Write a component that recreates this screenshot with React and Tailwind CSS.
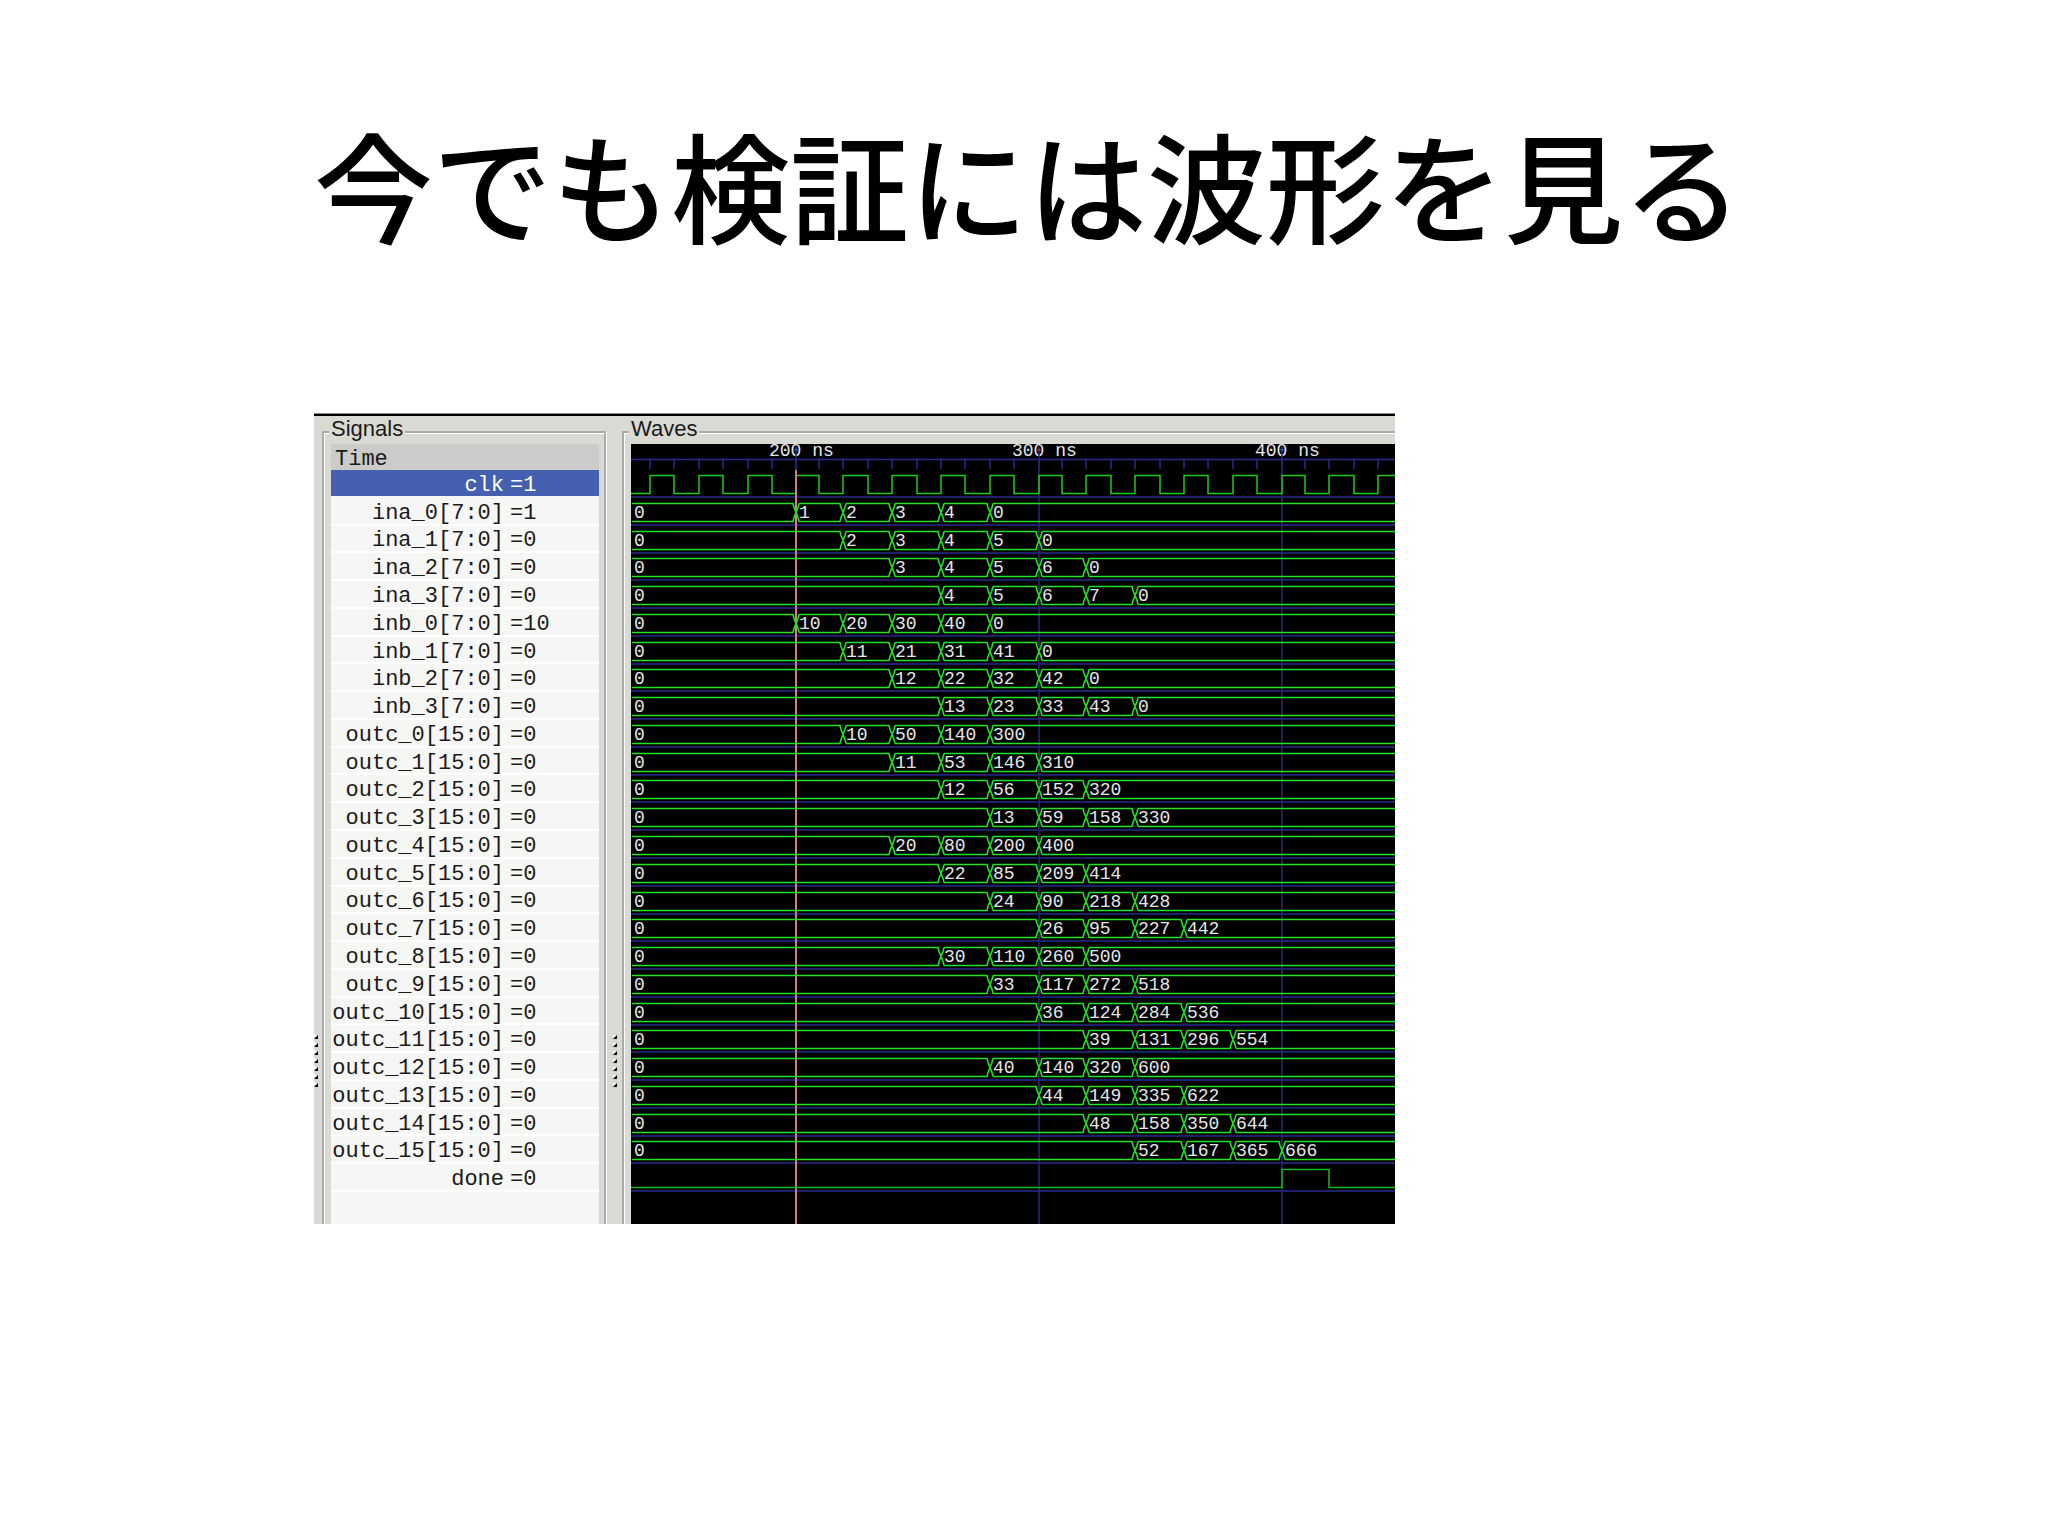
import React from 'react';

// Bus signals: the first value change and the values that follow every 20 ns
const BUSES = [
  { name: 'ina_0[7:0]', now: '1', start: 200, values: [1, 2, 3, 4, 0] },
  { name: 'ina_1[7:0]', now: '0', start: 220, values: [2, 3, 4, 5, 0] },
  { name: 'ina_2[7:0]', now: '0', start: 240, values: [3, 4, 5, 6, 0] },
  { name: 'ina_3[7:0]', now: '0', start: 260, values: [4, 5, 6, 7, 0] },
  { name: 'inb_0[7:0]', now: '10', start: 200, values: [10, 20, 30, 40, 0] },
  { name: 'inb_1[7:0]', now: '0', start: 220, values: [11, 21, 31, 41, 0] },
  { name: 'inb_2[7:0]', now: '0', start: 240, values: [12, 22, 32, 42, 0] },
  { name: 'inb_3[7:0]', now: '0', start: 260, values: [13, 23, 33, 43, 0] },
  { name: 'outc_0[15:0]', now: '0', start: 220, values: [10, 50, 140, 300] },
  { name: 'outc_1[15:0]', now: '0', start: 240, values: [11, 53, 146, 310] },
  { name: 'outc_2[15:0]', now: '0', start: 260, values: [12, 56, 152, 320] },
  { name: 'outc_3[15:0]', now: '0', start: 280, values: [13, 59, 158, 330] },
  { name: 'outc_4[15:0]', now: '0', start: 240, values: [20, 80, 200, 400] },
  { name: 'outc_5[15:0]', now: '0', start: 260, values: [22, 85, 209, 414] },
  { name: 'outc_6[15:0]', now: '0', start: 280, values: [24, 90, 218, 428] },
  { name: 'outc_7[15:0]', now: '0', start: 300, values: [26, 95, 227, 442] },
  { name: 'outc_8[15:0]', now: '0', start: 260, values: [30, 110, 260, 500] },
  { name: 'outc_9[15:0]', now: '0', start: 280, values: [33, 117, 272, 518] },
  { name: 'outc_10[15:0]', now: '0', start: 300, values: [36, 124, 284, 536] },
  { name: 'outc_11[15:0]', now: '0', start: 320, values: [39, 131, 296, 554] },
  { name: 'outc_12[15:0]', now: '0', start: 280, values: [40, 140, 320, 600] },
  { name: 'outc_13[15:0]', now: '0', start: 300, values: [44, 149, 335, 622] },
  { name: 'outc_14[15:0]', now: '0', start: 320, values: [48, 158, 350, 644] },
  { name: 'outc_15[15:0]', now: '0', start: 340, values: [52, 167, 365, 666] },
];

const SIGNALS = [{ name: 'clk', now: '1' }, ...BUSES, { name: 'done', now: '0' }];

const HEADER = 26;
const PITCH = 722 / 26;
const FAR = 4000; // traces run on past the right edge and are clipped there

const MAJOR = { 200: 165, 300: 408, 400: 651 };
const TICKS = Array.from({ length: 31 }, (_, i) => 140 + i * 10);

// Time in ns to x inside the wave area
const timeToX = (t) => {
  if (t < 200) return Math.round(141 - ((190 - t) / 10) * 24.4);
  const base = Math.min(Math.floor(t / 100) * 100, 400);
  const steps = (t - base) / 10;
  return steps === 0 ? MAJOR[base] : Math.round(MAJOR[base] + 23 + (steps - 1) * 24.4);
};

const rowTop = (i) => Math.round(HEADER + i * PITCH);

const clockPath = () => {
  const hi = rowTop(0) + 5.5;
  const lo = rowTop(0) + 23.5;
  let d = `M0 ${lo}`;
  TICKS.forEach((t) => {
    d += ` H${timeToX(t)} V${t % 20 === 0 ? hi : lo}`;
  });
  return `${d} H${FAR}`;
};

const donePath = () => {
  const y = rowTop(25);
  return `M0 ${y + 23.5} H${timeToX(400)} V${y + 5.5} H${timeToX(420)} V${y + 23.5} H${FAR}`;
};

// One bus: two rails with a crossing at every value change
const BusTrace = ({ bus, row }) => {
  const y = rowTop(row);
  const top = y + 5.5;
  const bottom = y + 23.5;
  const edges = bus.values.map((_, i) => timeToX(bus.start + i * 20));
  let d = '';
  let from = 1;
  edges.forEach((x) => {
    d += `M${from} ${top} H${x - 3} L${x - 2} ${top + 4} L${x + 2} ${bottom - 4} L${x + 3} ${bottom} `;
    d += `M${from} ${bottom} H${x - 3} L${x - 2} ${bottom - 4} L${x + 2} ${top + 4} L${x + 3} ${top} `;
    from = x + 3;
  });
  d += `M${from} ${top} H${FAR} M${from} ${bottom} H${FAR}`;

  return (
    <g>
      <path d={d} fill="none" stroke="#22e022" strokeWidth="1.6" />
      <text x="3" y={y + 20}>0</text>
      {bus.values.map((value, i) => (
        <text key={i} x={edges[i] + 3} y={y + 20}>{value}</text>
      ))}
    </g>
  );
};

// The drawing starts 4px above the black area, so the time labels have headroom
const WaveArea = () => (
  <div className="flex h-[780px] bg-black">
    <svg
      className="-mt-1 h-[784px] w-full overflow-hidden font-['Liberation_Mono',monospace] text-[18px]"
      fill="#e6e6e6"
      role="img"
      aria-label="Waves"
    >
      <g transform="translate(0 4)">
        <g stroke="#2a2a8c" strokeWidth="1.5">
          <path d={`M0 15.5 H${FAR}`} />
          {TICKS.map((t) => (
            <path key={t} d={`M${timeToX(t)} 16 V25`} />
          ))}
          {SIGNALS.map((signal, i) => (
            <path key={signal.name} d={`M0 ${rowTop(i) + 27} H${FAR}`} />
          ))}
        </g>
        {Object.entries(MAJOR).map(([t, x]) => (
          <g key={t}>
            <text x={x - 27} y="12">{t} ns</text>
            <path d={`M${x} 3 V780`} stroke="#262674" strokeWidth="1.6" />
          </g>
        ))}
        <path d={clockPath()} fill="none" stroke="#1ccc1c" strokeWidth="1.5" />
        <path d="M165 26 V780" stroke="#cf8080" strokeWidth="2" />
        {BUSES.map((bus, i) => (
          <BusTrace key={bus.name} bus={bus} row={i + 1} />
        ))}
        <path d={donePath()} fill="none" stroke="#16b816" strokeWidth="1.5" />
      </g>
    </svg>
  </div>
);

const SignalList = () => (
  <div className="h-[780px] bg-[#f6f6f4] font-['Liberation_Mono',monospace] text-[22px] text-[#1a1a1a]">
    <div className="h-[26px] bg-[#cbcbc9] pl-1 pt-[3px] leading-[26px]">Time</div>
    <ul className="grid h-[722px] grid-rows-[repeat(26,minmax(0,1fr))]">
      {SIGNALS.map((signal, i) => (
        <li
          key={signal.name}
          className={`flex items-center gap-1.5 border-b-2 pt-1.5 leading-5 ${
            i === 0 ? 'border-[#f6f6f4] bg-[#4460ae] bg-clip-padding text-white' : 'border-white'
          }`}
        >
          <span className="w-[173px] text-right">{signal.name}</span>
          <span>={signal.now}</span>
        </li>
      ))}
    </ul>
  </div>
);

// Dotted handle between two panes
const Grip = () => (
  <svg className="mt-[615px] h-14 w-1 shrink-0" viewBox="0 0 4 56" aria-hidden="true">
    {[0, 1, 2, 3, 4, 5, 6].map((i) => (
      <g key={i}>
        <path d={`M0 ${i * 8} h3 l-3 3 z`} fill="#fff" />
        <path d={`M4 ${i * 8} v4 h-4 z`} fill="#000" />
      </g>
    ))}
  </svg>
);

const Pane = ({ title, className, children }) => (
  <fieldset className={`min-w-0 border-3 border-b-0 border-white pl-1.5 [border-style:groove] ${className}`}>
    <legend className="-ml-0.5 px-0.5 pb-1.5 font-['Liberation_Sans',sans-serif] text-[22px] leading-[18px] text-[#1a1a1a]">
      {title}
    </legend>
    {children}
  </fieldset>
);

const App = () => (
  <main className="min-h-screen bg-white pt-[123px]">
    <h1 className="pl-2 text-center font-['Noto_Sans_CJK_JP',sans-serif] text-[119px] font-medium leading-[120px] text-black">
      今でも検証には波形を見る
    </h1>

    <div className="ml-[314px] mt-[170px] w-full max-w-[1081px] border-t border-[#888] bg-[#dadad5]">
      <div className="flex items-start border-t-2 border-black pt-1">
        <Grip />
        <Pane title="Signals" className="ml-1 w-[285px] shrink-0 pr-[5px]">
          <SignalList />
        </Pane>
        <div className="flex w-[15px] shrink-0 justify-center">
          <Grip />
        </div>
        <Pane title="Waves" className="flex-1 border-r-0">
          <WaveArea />
        </Pane>
      </div>
    </div>
  </main>
);

export default App;
